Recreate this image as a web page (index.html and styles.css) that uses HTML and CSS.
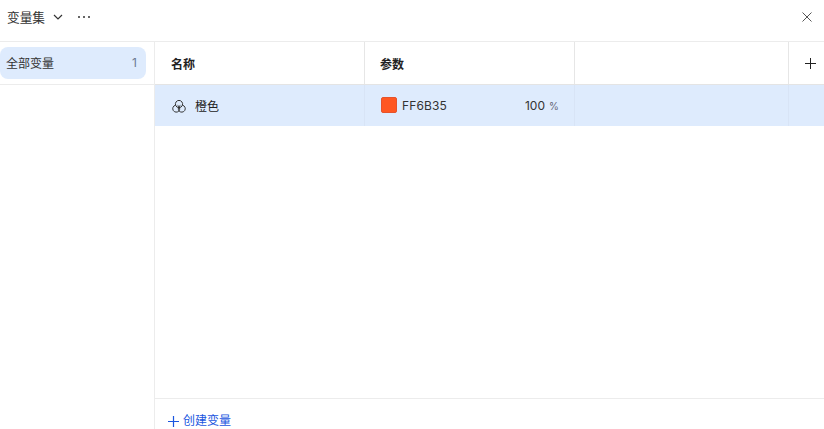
FILE: index.html
```html
<!DOCTYPE html>
<html lang="zh">
<head>
<meta charset="utf-8">
<title>变量集</title>
<link rel="stylesheet" href="styles.css">
</head>
<body>
<div class="app">
  <header class="topbar">
    <div class="title-group">
      <span class="title">变量集</span>
      <svg class="chevron" width="10" height="6" viewBox="0 0 10 6"><path d="M1 1l4 4 4-4" fill="none" stroke="#333" stroke-width="1.2"/></svg>
      <svg class="more" width="14" height="4" viewBox="0 0 14 4"><circle cx="2" cy="2" r="1" fill="#333"/><circle cx="7" cy="2" r="1" fill="#333"/><circle cx="12" cy="2" r="1" fill="#333"/></svg>
    </div>
    <svg class="close" width="10" height="10" viewBox="0 0 10 10"><path d="M.5.5l9 9M9.5.5l-9 9" fill="none" stroke="#555" stroke-width="1"/></svg>
  </header>
  <div class="body">
    <aside class="sidebar">
      <div class="side-top">
        <div class="side-item"><span class="side-label">全部变量</span><span class="count">1</span></div>
      </div>
    </aside>
    <main class="main">
      <div class="table">
        <div class="row head">
          <div class="cell c-name">名称</div>
          <div class="cell c-param">参数</div>
          <div class="cell c-empty"></div>
          <div class="cell c-add"><svg width="11" height="11" viewBox="0 0 11 11"><path d="M5.5 0v11M0 5.5h11" fill="none" stroke="#222" stroke-width="1"/></svg></div>
        </div>
        <div class="row data">
          <div class="cell c-name">
            <svg class="style-icon" width="16" height="14" viewBox="0 0 16 14"><path d="M4.6 6.2a3.6 3.6 0 1 1 6.8 0a3.5 3.5 0 1 1-3.4 5.6a3.5 3.5 0 1 1-3.4-5.6zM4.6 6.2a3.6 3.6 0 0 0 6.8 0M8 11.8a3.6 3.6 0 0 1 1.4-5.4M8 11.8a3.6 3.6 0 0 0-1.4-5.4" fill="none" stroke="#333" stroke-width="1"/></svg>
            <span class="row-text">橙色</span>
          </div>
          <div class="cell c-param">
            <span class="swatch"></span>
            <span class="hex">FF6B35</span>
            <span class="opacity">100</span>
            <span class="pct">%</span>
          </div>
          <div class="cell c-empty"></div>
          <div class="cell c-add"></div>
        </div>
      </div>
      <footer class="footer">
        <button class="create" type="button">
          <svg width="11" height="11" viewBox="0 0 11 11"><path d="M5.5 0v11M0 5.5h11" fill="none" stroke="#1a56e0" stroke-width="1.2"/></svg>
          <span>创建变量</span>
        </button>
      </footer>
    </main>
  </div>
</div>
</body>
</html>
```
FILE: styles.css
```css
* { box-sizing: border-box; }
html, body { margin: 0; height: 100%; overflow: hidden; }
body { background: #fff; font-family: Inter, "Noto Sans CJK SC", sans-serif; font-size: 12px; color: #222; }
.app { width: 824px; height: 429px; display: flex; flex-direction: column; }
.topbar { height: 42px; flex: none; border-bottom: 1px solid #ececec; display: flex; align-items: center; justify-content: space-between; padding: 0 12px 8px 7px; }
.title-group { display: flex; align-items: center; }
.title { font-size: 12.7px; color: #333; }
.chevron { margin-left: 8px; }
.more { margin-left: 14px; }
.body { flex: 1; display: flex; min-height: 0; }
.sidebar { width: 155px; flex: none; border-right: 1px solid #ececec; }
.side-top { height: 43px; padding: 5px 8px 6px 0; border-bottom: 1px solid #ececec; }
.side-item { height: 32px; background: #deebfd; border-radius: 8px; display: flex; align-items: center; justify-content: space-between; padding: 0 9px 0 6px; color: #333; }
.side-label { margin-top: -2px; }
.count { color: #6b7a90; margin-top: -1px; }
.main { flex: 1; display: flex; flex-direction: column; min-width: 0; }
.table { flex: 1; }
.row { display: flex; }
.head { height: 43px; border-bottom: 1px solid #e4e4e4; font-weight: 700; }
.data { height: 41px; background: #deebfd; }
.cell { display: flex; align-items: center; border-right: 1px solid #e6e6e6; }
.data .cell { border-right-color: #d8e4f6; }
.c-name { width: 210px; padding-left: 16px; }
.c-param { width: 210px; padding: 0 16px 0 15px; }
.c-empty { width: 214px; }
.c-add { flex: 1; border-right: 0; justify-content: flex-end; padding-right: 8px; }
.style-icon { margin-right: 8px; }
.row-text { margin-top: -1px; }
.swatch { width: 16px; height: 16px; background: #ff5722; border-radius: 2px; border: 1px solid #e5532c; margin: -1px 5px 0 1px; }
.hex { flex: 1; color: #333; letter-spacing: .15px; }
.opacity { color: #333; margin-right: 0; }
.pct { margin-left: 4px; font-size: 10px; color: #667; width: 10px; margin-right: -1px; }
.footer { height: 31px; flex: none; border-top: 1px solid #ececec; padding: 15px 0 0 13px; }
.create { border: 0; background: none; padding: 0; display: flex; align-items: center; gap: 4px; color: #1a56e0; font: inherit; line-height: 14px; }
```
